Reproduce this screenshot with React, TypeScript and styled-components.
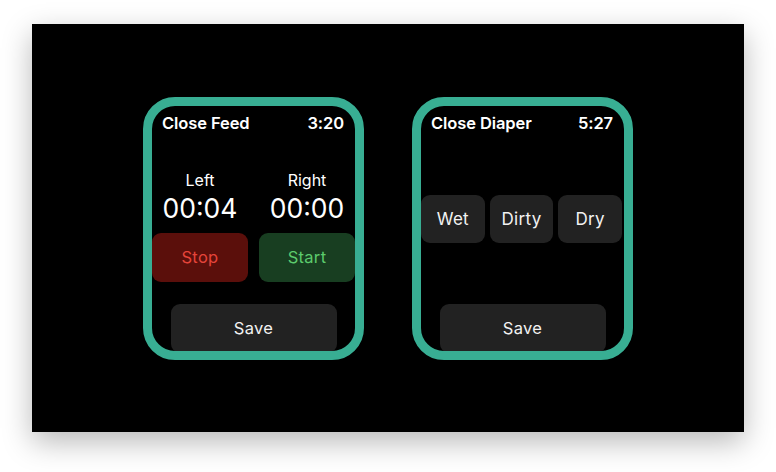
import styled, { createGlobalStyle } from "styled-components";

const GlobalStyle = createGlobalStyle`
  html, body {
    margin: 0;
    padding: 0;
    background: #ffffff;
  }
  body {
    font-family: Inter, "Noto Sans", "Liberation Sans", sans-serif;
    -webkit-font-smoothing: antialiased;
  }
`;

/** Page frame around the black stage */
const Page = styled.div`
  width: 776px;
  height: 472px;
  padding: 24px 32px 40px;
  box-sizing: border-box;
`;

/** Black stage holding the watch faces */
const Stage = styled.div`
  width: 712px;
  height: 408px;
  background: #000;
  box-shadow: 0 10px 28px rgba(0, 0, 0, 0.28);
  display: flex;
  align-items: center;
  justify-content: center;
  gap: 48px;
`;

const Watch = styled.div`
  box-sizing: border-box;
  width: 221px;
  height: 263px;
  border: 9px solid #38ae93;
  border-radius: 32px;
  background: #000;
  overflow: hidden;
  display: flex;
  flex-direction: column;
  color: #fff;
`;

const Header = styled.div`
  display: flex;
  justify-content: space-between;
  align-items: center;
  height: 20px;
  margin-top: 7px;
  padding: 0 11px 0 10px;
  font-size: 16.5px;
  font-weight: 600;
  letter-spacing: -0.1px;
`;

const SidesRow = styled.div`
  display: flex;
  gap: 11px;
  margin-top: 37px;
`;

const SideColumn = styled.div`
  flex: 1;
  display: flex;
  flex-direction: column;
  align-items: center;
`;

const SideLabel = styled.div`
  height: 20px;
  line-height: 20px;
  font-size: 16px;
  font-weight: 400;
`;

const SideTime = styled.div`
  height: 32px;
  line-height: 32px;
  margin-top: 2px;
  font-size: 26.5px;
  font-weight: 400;
`;

const Tone = {
  stop: { bg: "#5b0f0b", fg: "#e5443a" },
  start: { bg: "#183e21", fg: "#5ccb6d" },
  plain: { bg: "#222222", fg: "#f2f2f2" },
};

const Button = styled.div<{ $tone: keyof typeof Tone }>`
  display: flex;
  align-items: center;
  justify-content: center;
  height: 49px;
  border-radius: 9px;
  background: ${({ $tone }) => Tone[$tone].bg};
  color: ${({ $tone }) => Tone[$tone].fg};
  font-size: 16.5px;
  font-weight: 400;
  letter-spacing: 0.3px;
`;

const SideButton = styled(Button)`
  align-self: stretch;
  margin-top: 9px;
`;

const SaveButton = styled(Button)<{ $gap?: number }>`
  width: 166px;
  align-self: center;
  flex-shrink: 0;
  margin-top: ${({ $gap }) => $gap ?? 22}px;
`;

const ChoiceRow = styled.div`
  display: flex;
  gap: 5px;
  margin-top: 62px;
  padding-right: 2px;
`;

const ChoiceButton = styled(Button)`
  flex: 1;
  height: 48px;
  font-size: 17px;
`;

function FeedWatch() {
  return (
    <Watch>
      <Header>
        <span>Close Feed</span>
        <span>3:20</span>
      </Header>
      <SidesRow>
        <SideColumn>
          <SideLabel>Left</SideLabel>
          <SideTime>00:04</SideTime>
          <SideButton $tone="stop">Stop</SideButton>
        </SideColumn>
        <SideColumn>
          <SideLabel>Right</SideLabel>
          <SideTime>00:00</SideTime>
          <SideButton $tone="start">Start</SideButton>
        </SideColumn>
      </SidesRow>
      <SaveButton $tone="plain">Save</SaveButton>
    </Watch>
  );
}

function DiaperWatch() {
  return (
    <Watch>
      <Header>
        <span>Close Diaper</span>
        <span>5:27</span>
      </Header>
      <ChoiceRow>
        <ChoiceButton $tone="plain">Wet</ChoiceButton>
        <ChoiceButton $tone="plain">Dirty</ChoiceButton>
        <ChoiceButton $tone="plain">Dry</ChoiceButton>
      </ChoiceRow>
      <SaveButton $tone="plain" $gap={61}>
        Save
      </SaveButton>
    </Watch>
  );
}

export default function App() {
  return (
    <>
      <GlobalStyle />
      <Page>
        <Stage>
          <FeedWatch />
          <DiaperWatch />
        </Stage>
      </Page>
    </>
  );
}
